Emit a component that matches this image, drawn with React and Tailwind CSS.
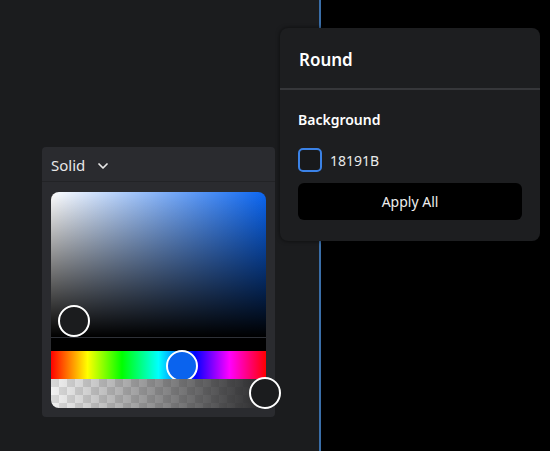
import React from 'react'
import { ChevronDown } from 'lucide-react'

// Colour picker popup with hue/alpha sliders
const ColorPicker = () => (
  <div className="absolute left-[42px] top-[147px] w-[233px] h-[270px] bg-[#2a2b2f] rounded-sm">
    <div className="h-[35px] flex items-center pl-[9px] pt-[3px] gap-[10px] border-b border-[#222326] text-[15px] text-[#e8e8e8]">
      <span>Solid</span>
      <ChevronDown size={16} strokeWidth={2.6} />
    </div>
    <div className="px-[9px] pt-[10px]">
      <div className="relative h-[145px] rounded-t-lg bg-[linear-gradient(to_top,#000,transparent),linear-gradient(to_right,#fff,#0b66f2)]">
        <div className="absolute left-[7px] top-[113px] w-[32px] h-[32px] rounded-full border-2 border-white bg-[#1b1c1e]" />
      </div>
      <div className="h-[14px] bg-black border-t border-[#2e3138]" />
      <div className="relative h-[28px] bg-[linear-gradient(to_right,#f00,#ff0_17%,#0f0_33%,#0ff_50%,#00f_67%,#f0f_83%,#f00)]">
        <div className="absolute left-[115px] top-[-1px] w-[32px] h-[32px] rounded-full border-2 border-white bg-[#0a63ee]" />
      </div>
      <div className="relative h-[29px] rounded-bl-lg bg-[repeating-conic-gradient(#f2f2f2_0_25%,#d9d9d9_0_50%)] bg-[length:16px_16px]">
        <div className="absolute inset-0 rounded-bl-lg bg-[linear-gradient(to_right,rgba(40,40,42,0),rgba(40,40,42,1))]" />
        <div className="absolute left-[198px] top-[-2px] w-[32px] h-[32px] rounded-full border-2 border-white bg-[#1b1c1e]" />
      </div>
    </div>
  </div>
)

const RoundPopover = () => (
  <div className="absolute left-[280px] top-[28px] w-[260px] h-[213px] bg-[#1d1e20] rounded-lg shadow-[0_0_4px_rgba(0,0,0,0.6)] text-white">
    <div className="h-[62px] flex items-center px-[19px] pt-[3px] border-b-2 border-[#36373a]">
      <h3 className="text-[17px] font-semibold">Round</h3>
    </div>
    <div className="px-[18px] pt-[19px]">
      <div className="text-[14px] font-semibold">Background</div>
      <div className="flex items-center gap-[8px] mt-[18px]">
        <span className="w-[24px] h-[24px] rounded-[5px] border-2 border-[#3b82e6] bg-[#18191b]" />
        <span className="text-[14px] text-[#eaeaea]">18191B</span>
      </div>
      <button className="mt-[11px] w-[224px] h-[37px] bg-black rounded-md text-[14px] text-[#eeeeee]">
        Apply All
      </button>
    </div>
  </div>
)

const App = () => (
  <div className="relative w-[550px] h-[451px] overflow-hidden flex font-['Noto_Sans',sans-serif]">
    <div className="w-[319px] bg-[#1b1c1e]" />
    <div className="w-[2px] bg-[#3a6ea8]" />
    <div className="flex-1 bg-black" />
    <ColorPicker />
    <RoundPopover />
  </div>
)

export default App
